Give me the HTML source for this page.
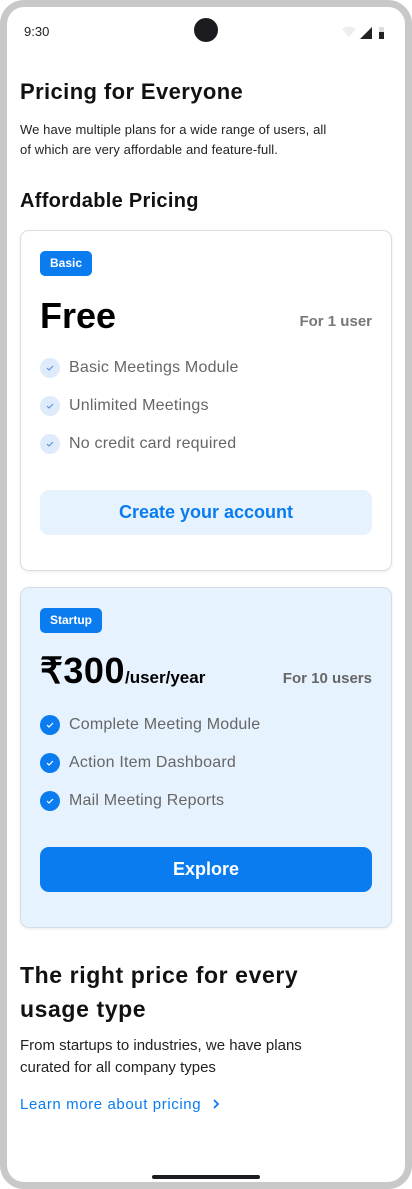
<!DOCTYPE html>
<html><head><meta charset="utf-8"><style>
*{box-sizing:border-box;margin:0;padding:0}
body{width:412px;height:1189px;background:#fff;font-family:"Liberation Sans",sans-serif;position:relative;overflow:hidden}
.frame{position:absolute;left:0;top:0;width:412px;height:1189px;border:7px solid #c8c8c8;border-radius:24px;background:#fff}
.abs{position:absolute}
.h1{font-size:22px;font-weight:bold;color:#111;letter-spacing:0.1px}
.p{font-size:13px;color:#222;line-height:20px;letter-spacing:0.1px;white-space:nowrap}
.card{position:absolute;left:20px;width:372px;border-radius:9px}
.badge{position:absolute;left:19px;background:#0a7cf0;color:#fff;font-size:12px;font-weight:bold;border-radius:5px;height:25px;line-height:25px;padding:0 10px}
.li{position:absolute;left:19px;font-size:16px;color:#666;height:20px;line-height:20px;padding-left:29px;letter-spacing:0.2px}
.li i{position:absolute;left:0;top:0;width:20px;height:20px;border-radius:50%}
.li i svg{position:absolute;left:5px;top:5px}
.btn{position:absolute;left:19px;width:332px;height:45px;border-radius:9px;text-align:center;line-height:45px;font-size:18px;font-weight:bold}
</style></head><body>
<div class="frame"></div>
<div class="abs" style="left:24px;top:24px;font-size:13px;color:#222">9:30</div>
<div class="abs" style="left:194px;top:18px;width:24px;height:24px;border-radius:50%;background:#1c1b1f"></div>
<svg class="abs" style="left:341px;top:26px" width="50" height="14"><path d="M1 3 Q8 -2 15 3 L8 11 Z" fill="#eee"/><path d="M19 13 L31 13 L31 1 Z" fill="#222"/><rect x="38" y="1" width="5" height="12" fill="#ddd"/><rect x="38" y="6" width="5" height="7" fill="#222"/></svg>
<div class="abs h1" style="left:20px;top:79px;letter-spacing:0.4px">Pricing for Everyone</div>
<div class="abs p" style="left:20px;top:120px">We have multiple plans for a wide range of users, all<br>of which are very affordable and feature-full.</div>
<div class="abs h1" style="left:20px;top:190px;font-size:20px;letter-spacing:0.3px">Affordable Pricing</div>

<div class="card" style="top:230px;height:341px;border:1px solid #ddd;box-shadow:0 1px 3px rgba(0,0,0,.08)">
<div class="badge" style="top:20px">Basic</div>
<div class="abs" style="left:19px;top:64px;font-size:36px;font-weight:bold;color:#000">Free</div>
<div class="abs" style="right:19px;top:82px;font-size:15px;color:#777;font-weight:bold">For 1 user</div>
<div class="li" style="top:127px"><i style="background:#deebfb"><svg width="10" height="10"><path d="M2 5 L4 7 L8 3" stroke="#5a8ad8" stroke-width="1" fill="none"/></svg></i>Basic Meetings Module</div>
<div class="li" style="top:165px"><i style="background:#deebfb"><svg width="10" height="10"><path d="M2 5 L4 7 L8 3" stroke="#5a8ad8" stroke-width="1" fill="none"/></svg></i>Unlimited Meetings</div>
<div class="li" style="top:203px"><i style="background:#deebfb"><svg width="10" height="10"><path d="M2 5 L4 7 L8 3" stroke="#5a8ad8" stroke-width="1" fill="none"/></svg></i>No credit card required</div>
<div class="btn" style="top:259px;background:#e6f2fd;color:#0a7cf0">Create your account</div>
</div>

<div class="card" style="top:587px;height:341px;background:#e6f2fd;border:1px solid #d4dde6;box-shadow:0 1px 3px rgba(0,0,0,.08)">
<div class="badge" style="top:20px">Startup</div>
<div class="abs" style="left:19px;top:62px;font-size:36px;font-weight:bold;color:#000;white-space:nowrap;letter-spacing:0.5px">₹300<span style="font-size:17px;letter-spacing:0">/user/year</span></div>
<div class="abs" style="right:19px;top:82px;font-size:15px;color:#666;font-weight:bold">For 10 users</div>
<div class="li" style="top:127px"><i style="background:#0a7cf0"><svg width="10" height="10"><path d="M2 5 L4 7 L8 3" stroke="#fff" stroke-width="1.2" fill="none"/></svg></i>Complete Meeting Module</div>
<div class="li" style="top:165px"><i style="background:#0a7cf0"><svg width="10" height="10"><path d="M2 5 L4 7 L8 3" stroke="#fff" stroke-width="1.2" fill="none"/></svg></i>Action Item Dashboard</div>
<div class="li" style="top:203px"><i style="background:#0a7cf0"><svg width="10" height="10"><path d="M2 5 L4 7 L8 3" stroke="#fff" stroke-width="1.2" fill="none"/></svg></i>Mail Meeting Reports</div>
<div class="btn" style="top:259px;background:#0a7cf0;color:#fff">Explore</div>
</div>

<div class="abs h1" style="left:20px;top:958px;font-size:23px;line-height:34px;width:330px;letter-spacing:0.6px">The right price for every usage type</div>
<div class="abs" style="left:20px;top:1035px;font-size:15px;line-height:22px;color:#222;width:330px">From startups to industries, we have plans curated for all company types</div>
<div class="abs" style="left:20px;top:1096px;font-size:15px;color:#0a7cf0;letter-spacing:0.6px">Learn more about pricing <svg width="12" height="12" style="margin-left:4px;vertical-align:-1px"><path d="M4 2 L8 6 L4 10" stroke="#0a7cf0" stroke-width="1.8" fill="none"/></svg></div>
<div class="abs" style="left:152px;top:1175px;width:108px;height:4px;border-radius:2px;background:#1c1b1f"></div>
</body></html>
